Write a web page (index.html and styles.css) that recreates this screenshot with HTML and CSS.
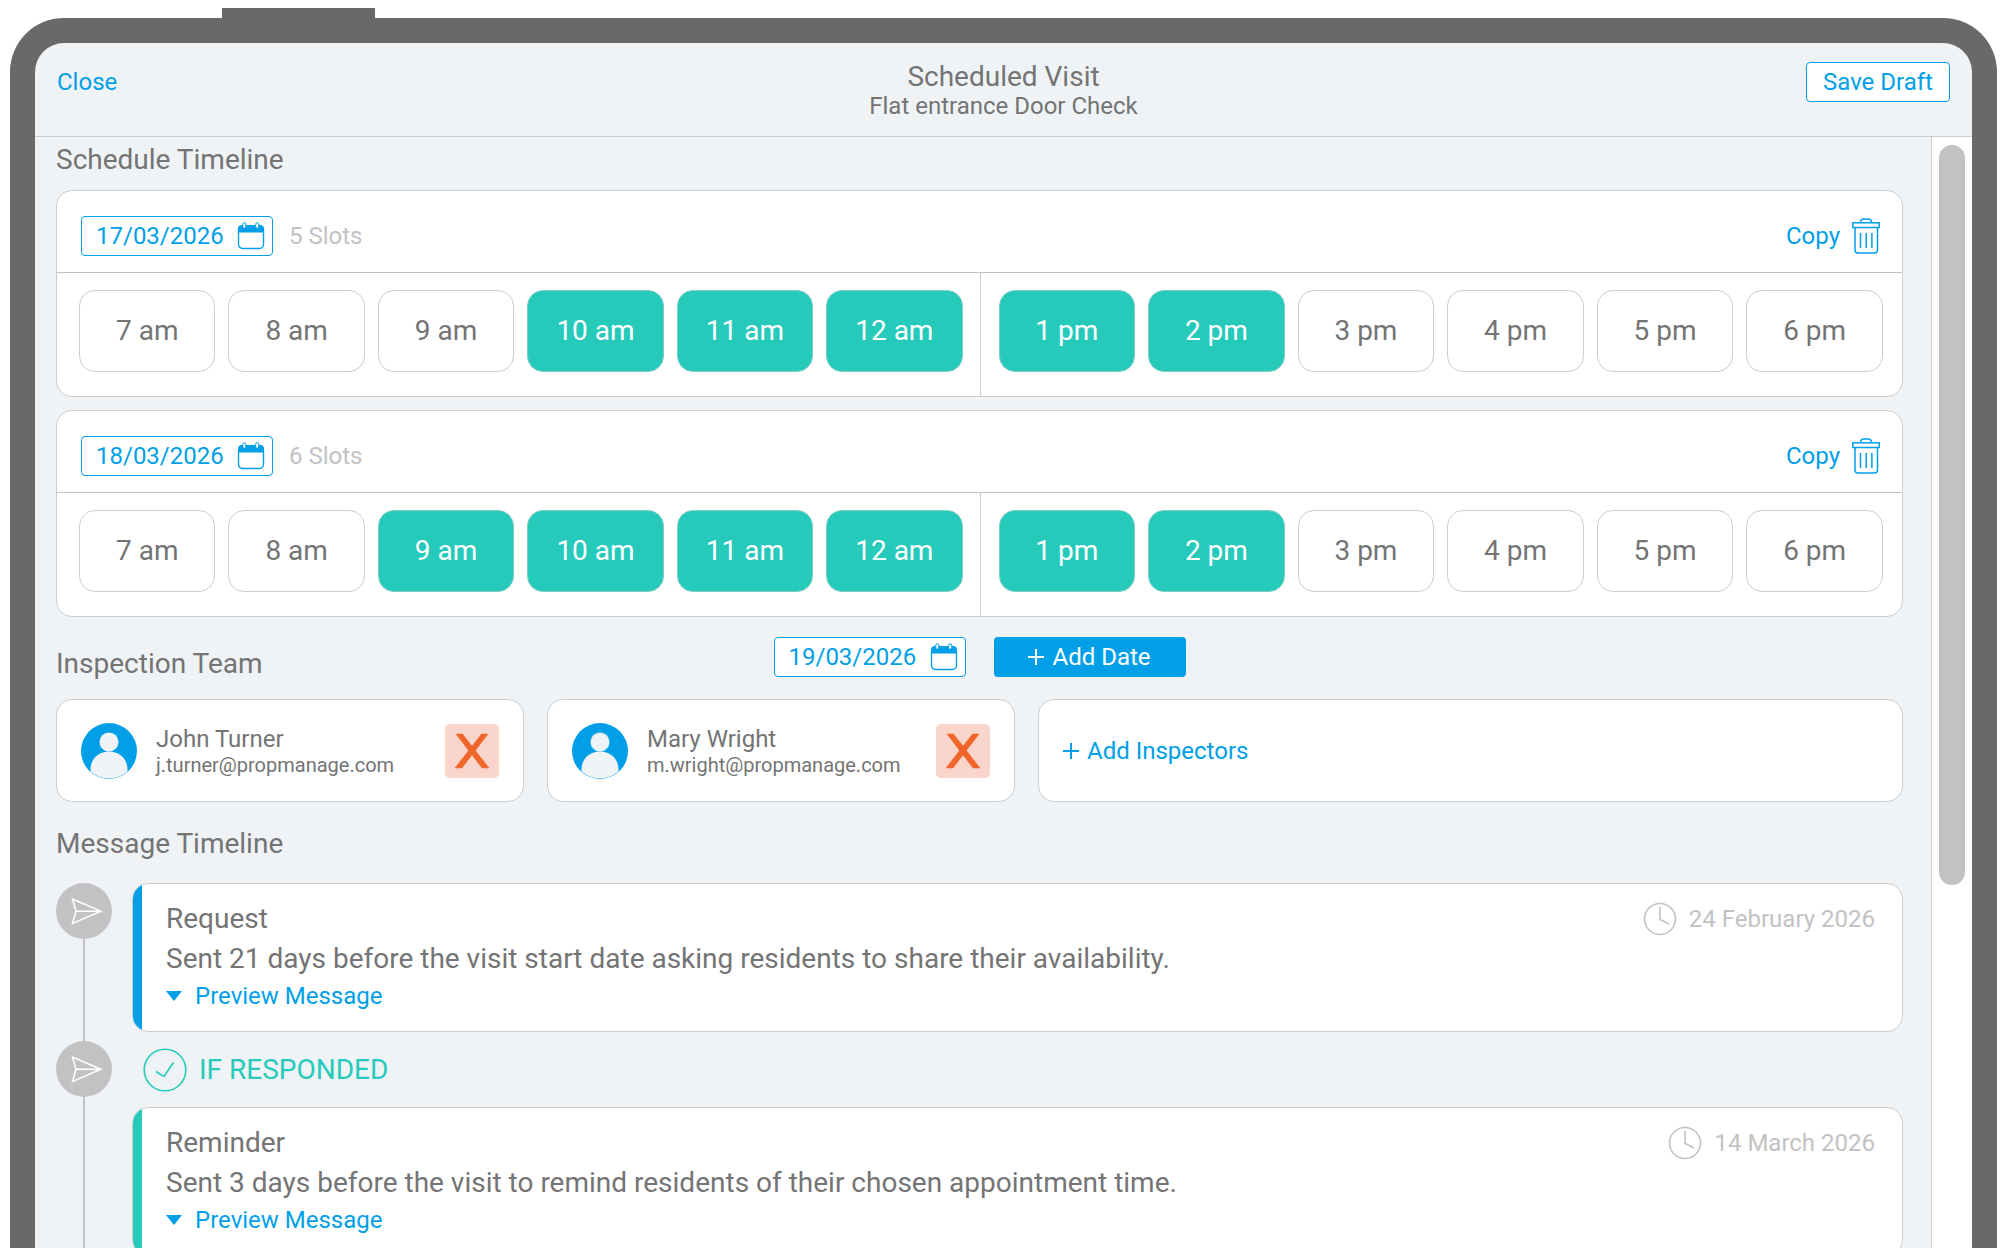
FILE: index.html
```html
<!DOCTYPE html>
<html lang="en">
<head>
  <meta charset="UTF-8" />
  <title>Scheduled Visit</title>
  <meta name="viewport" content="width=device-width, initial-scale=1.0"/>
  <link rel="stylesheet" href="styles.css">
</head>
<body>

  <!-- Shared icons -->
  <svg class="sprite" aria-hidden="true">
    <symbol id="icon-calendar" viewBox="0 0 28 28">
      <rect x="1.5" y="4" width="25" height="22.5" rx="4" fill="#fff" stroke="#009fe8" stroke-width="1.4"/>
      <path d="M1 10.5V7a4 4 0 0 1 4-4h18a4 4 0 0 1 4 4v3.500z" fill="#009fe8"/>
      <rect x="5.800" y="0.700" width="3" height="5.600" rx="1.500" fill="#fff" stroke="#009fe8"/>
      <rect x="18.700" y="0.700" width="3" height="5.600" rx="1.500" fill="#fff" stroke="#009fe8"/>
    </symbol>
    <symbol id="icon-bin" viewBox="0 0 28 36">
      <g fill="none" stroke="#009fe8" stroke-width="1.5">
        <path d="M8.500 4.500C8.500 2 10 1 12 1h4c2 0 3.500 1 3.500 3.500"/>
        <rect x="0.800" y="4.800" width="26.400" height="4.700"/>
        <path d="M3 9.500V32a3 3 0 0 0 3 3h16.500a3 3 0 0 0 3-3V9.500"/>
        <path d="M8.500 15v15M14.200 15v15M19.900 15v15"/>
      </g>
    </symbol>
    <symbol id="icon-user" viewBox="0 0 56 56">
      <circle cx="28" cy="28" r="28" fill="#009fe8"/>
      <circle cx="28" cy="19" r="9.500" fill="#eff3f5"/>
      <path d="M9.500 48.500V47C9.500 36 17 28.500 28 28.500S46.500 36 46.500 47v1.500A28 28 0 0 1 9.500 48.500z" fill="#eff3f5"/>
    </symbol>
    <symbol id="icon-remove" viewBox="0 0 54 54">
      <path d="M11 10H17.500L44 44H37z" fill="#f0652a" stroke="#f0652a" stroke-width="0.5"/>
      <path d="M43 10H36.500L10 44H17z" fill="#f0652a" stroke="#f0652a" stroke-width="0.5"/>
    </symbol>
    <symbol id="icon-send" viewBox="0 0 56 56">
      <path d="M16.500 16L45 28.300L16.500 40.500L20 28.300zM20 28.300H45" fill="none" stroke="#fff" stroke-width="1.500"/>
    </symbol>
    <symbol id="icon-check" viewBox="0 0 44 44">
      <circle cx="22" cy="22" r="20.800" fill="none" stroke="#26cabb" stroke-width="1.600"/>
      <path d="M13 23.500L21 28.500L30.500 14.500" fill="none" stroke="#26cabb" stroke-width="1.600"/>
    </symbol>
    <symbol id="icon-clock" viewBox="0 0 34 34">
      <g fill="none" stroke="#c2c2c4" stroke-width="1.600">
        <circle cx="17" cy="17" r="15.500"/>
        <path d="M17 5v12.500l9 4.500"/>
      </g>
    </symbol>
  </svg>

  <div class="device-button"></div>
  <div class="device">

    <!-- Top bar -->
    <header>
      <a href="#" class="close">Close</a>
      <div class="title">
        <h1>Scheduled Visit</h1>
        <p>Flat entrance Door Check</p>
      </div>
      <button class="save">Save Draft</button>
    </header>

    <div class="body">
      <main>

        <!-- Schedule -->
        <h2>Schedule Timeline</h2>
        <div id="days"></div>

        <div class="team-head">
          <h2>Inspection Team</h2>
          <div class="new-date">
            <label class="date">
              <input type="text" value="19/03/2026" aria-label="New date" />
              <svg><use href="#icon-calendar"/></svg>
            </label>
            <button class="add-date"><svg viewBox="0 0 16 16"><path d="M8 0v16M0 8h16"/></svg>Add Date</button>
          </div>
        </div>

        <!-- Inspectors -->
        <div class="team">
          <div class="card member">
            <svg class="avatar"><use href="#icon-user"/></svg>
            <div class="who">
              <h3>John Turner</h3>
              <p>j.turner@propmanage.com</p>
            </div>
            <button class="remove" aria-label="Remove John Turner"><svg><use href="#icon-remove"/></svg></button>
          </div>
          <div class="card member">
            <svg class="avatar"><use href="#icon-user"/></svg>
            <div class="who">
              <h3>Mary Wright</h3>
              <p>m.wright@propmanage.com</p>
            </div>
            <button class="remove" aria-label="Remove Mary Wright"><svg><use href="#icon-remove"/></svg></button>
          </div>
          <div class="card member">
            <button class="add-inspectors"><svg viewBox="0 0 16 16"><path d="M8 0v16M0 8h16"/></svg>Add Inspectors</button>
          </div>
        </div>

        <!-- Messages -->
        <h2 class="message-head">Message Timeline</h2>
        <div class="timeline">
          <div class="step">
            <div class="node"><svg><use href="#icon-send"/></svg></div>
            <article class="card message">
              <div class="message-top">
                <h3>Request</h3>
                <span class="when"><svg><use href="#icon-clock"/></svg>24 February 2026</span>
              </div>
              <p>Sent 21 days before the visit start date asking residents to share their availability.</p>
              <button class="preview">Preview Message</button>
            </article>
          </div>
          <div class="step">
            <div class="node"><svg><use href="#icon-send"/></svg></div>
            <div class="step-body">
              <div class="condition"><svg><use href="#icon-check"/></svg>IF RESPONDED</div>
              <article class="card message reminder">
                <div class="message-top">
                  <h3>Reminder</h3>
                  <span class="when"><svg><use href="#icon-clock"/></svg>14 March 2026</span>
                </div>
                <p>Sent 3 days before the visit to remind residents of their chosen appointment time.</p>
                <button class="preview">Preview Message</button>
              </article>
            </div>
          </div>
        </div>

      </main>
      <div class="scrollbar"><div class="thumb"></div></div>
    </div>
  </div>

  <script>
    const am = ["7 am", "8 am", "9 am", "10 am", "11 am", "12 am"];
    const pm = ["1 pm", "2 pm", "3 pm", "4 pm", "5 pm", "6 pm"];

    const days = [
      { date: "17/03/2026", picked: ["10 am", "11 am", "12 am", "1 pm", "2 pm"] },
      { date: "18/03/2026", picked: ["9 am", "10 am", "11 am", "12 am", "1 pm", "2 pm"] }
    ];

    function slots(times, picked) {
      return times.map(t => `<button class="slot" aria-pressed="${picked.includes(t)}" onclick="toggleSlot(this)">${t}</button>`).join("");
    }

    function toggleSlot(btn) {
      btn.setAttribute("aria-pressed", btn.getAttribute("aria-pressed") !== "true");
      const day = btn.closest(".day");
      day.querySelector(".count").textContent = day.querySelectorAll("[aria-pressed=true]").length + " Slots";
    }

    document.getElementById("days").innerHTML = days.map(d => `
      <section class="card day">
        <div class="day-head">
          <label class="date">
            <input type="text" value="${d.date}" aria-label="Visit date" />
            <svg><use href="#icon-calendar"/></svg>
          </label>
          <span class="count">${d.picked.length} Slots</span>
          <button class="copy">Copy</button>
          <button class="delete" aria-label="Delete date"><svg><use href="#icon-bin"/></svg></button>
        </div>
        <div class="slots">
          <div class="half">${slots(am, d.picked)}</div>
          <div class="half">${slots(pm, d.picked)}</div>
        </div>
      </section>
    `).join("");
  </script>

</body>
</html>
```
FILE: styles.css
```css
* { margin: 0; padding: 0; box-sizing: border-box; }
body { font-family: Roboto, 'Open Sans', sans-serif; font-size: 24px; line-height: 28px; background: #fff; color: #747475; height: 100vh; overflow: hidden; display: flex; flex-direction: column; }

h1, h2, h3 { font-weight: inherit; font-size: 28px; line-height: 36px; }
button, input { font: inherit; color: #009fe8; background: none; border: none; }
button { cursor: pointer; }
svg { display: block; flex-shrink: 0; }
.sprite { position: absolute; width: 0; height: 0; }

/* Tablet frame */
.device-button { width: 153px; height: 10px; margin: 8px 0 0 222px; background: #6b6869; flex-shrink: 0; }
.device { flex: 1; min-height: 0; margin: 0 3px 0 10px; border: 25px solid #6b6869; border-bottom: none; border-radius: 54px 54px 0 0; background: #eff3f5; overflow: hidden; display: flex; flex-direction: column; }

header { height: 94px; flex-shrink: 0; padding: 19px 22px 0; border-bottom: 1px solid #cccdcf; display: grid; grid-template-columns: 1fr auto 1fr; align-items: start; }
.close { color: #009fe8; text-decoration: none; line-height: 40px; }
.title { text-align: center; }
.title h1 { line-height: 30px; }
.save { justify-self: end; width: 144px; height: 40px; background: #fff; border: 1px solid #009fe8; border-radius: 4px; }

.body { flex: 1; min-height: 0; display: flex; }
main { flex: 1; overflow: hidden; padding: 5px 28px 0 21px; }
.scrollbar { width: 41px; background: #fff; border-left: 1px solid #cccdcf; padding: 8px 7px; }
.thumb { height: 740px; border-radius: 13px; background: #c2c2c4; }

.card { background: #fff; border: 1px solid #cccdcf; border-radius: 16px; }

/* Schedule */
.day { margin-top: 13px; }
h2 + #days .day:first-child { margin-top: 12px; }
.day-head { height: 82px; padding: 8px 22px 0 24px; display: flex; align-items: center; border-bottom: 1px solid #c2c2c4; }
.date { width: 192px; height: 40px; padding: 0 7px 0 14px; display: flex; align-items: center; justify-content: space-between; background: #fff; border: 1px solid #009fe8; border-radius: 4px; }
.date input { width: 136px; outline: none; }
.date svg { width: 28px; height: 28px; }
.count { margin-left: 16px; color: #c2c2c4; }
.copy { margin-left: auto; }
.delete { margin-left: 12px; }
.delete svg { width: 28px; height: 36px; }

.slots { display: grid; grid-template-columns: 1fr 1fr; }
.half { display: flex; gap: 13px; padding: 17px 17px 24px 22px; }
.half + .half { padding: 17px 19px 24px 18px; border-left: 1px solid #cccdcf; }
.slot { flex: 1; height: 82px; font-size: 28px; color: #747475; background: #fff; border: 1px solid #cccdcf; border-radius: 16px; }
.slot[aria-pressed=true] { background: #26cabb; border-color: #7fcdc5; color: #fff; }

/* Inspection team */
.team-head { margin-top: 20px; height: 45px; display: grid; grid-template-columns: 1fr auto 1fr; align-items: end; }
.new-date { display: flex; gap: 28px; align-self: start; }
.add-date { width: 192px; height: 40px; display: flex; align-items: center; justify-content: center; gap: 8px; background: #009fe8; color: #fff; border-radius: 4px; }
.add-date svg, .add-inspectors svg { width: 16px; height: 16px; stroke: currentColor; stroke-width: 2; }

.team { margin-top: 17px; display: grid; grid-template-columns: 468px 468px 1fr; gap: 23px; }
.member { height: 103px; padding: 0 24px; display: flex; align-items: center; }
.avatar { width: 56px; height: 56px; margin-right: 19px; }
.who h3 { font-size: 24px; line-height: 28px; }
.who p { font-size: 20px; line-height: 24px; }
.remove { margin-left: auto; background: #f9d5cb; border-radius: 5px; }
.remove svg { width: 54px; height: 54px; }
.add-inspectors { display: flex; align-items: center; gap: 8px; }

/* Message timeline */
.message-head { margin: 24px 0 21px; }
.step { display: flex; gap: 20px; background: linear-gradient(#c2c2c4, #c2c2c4) 27px 20px / 2px 100% no-repeat; }
.step:first-child { padding-bottom: 9px; }
.node { width: 56px; height: 56px; flex-shrink: 0; border-radius: 50%; background: #c2c2c4; }
.node svg { width: 56px; height: 56px; }
.step-body { flex: 1; }
.message { flex: 1; height: 149px; padding: 17px 27px 0 33px; position: relative; overflow: hidden; }
.message::before { content: ""; position: absolute; left: -1px; top: -1px; bottom: -1px; width: 10px; background: #009fe8; }
.reminder::before { background: #26cabb; }
.message-top { display: flex; justify-content: space-between; }
.message p { font-size: 28px; line-height: 44px; }
.when { display: flex; align-items: center; gap: 12px; color: #c2c2c4; }
.when svg { width: 34px; height: 34px; }
.preview { display: flex; align-items: center; gap: 13px; line-height: 30px; }
.preview::before { content: ""; border: 8px solid transparent; border-top: 10px solid #009fe8; border-bottom: none; }
.condition { height: 57px; margin-bottom: 9px; padding-left: 11px; display: flex; align-items: center; gap: 12px; font-size: 28px; color: #26cabb; }
.condition svg { width: 44px; height: 44px; }
```
